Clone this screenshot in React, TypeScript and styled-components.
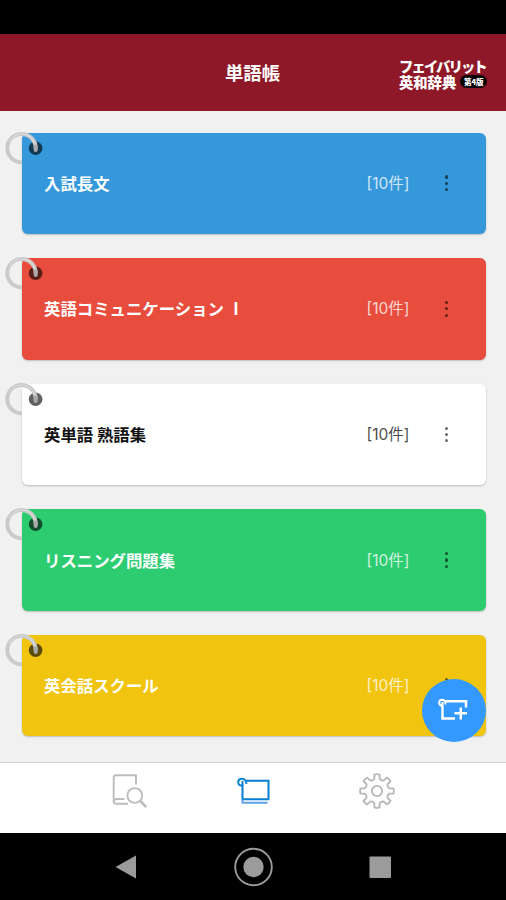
import React from "react";
import styled, { createGlobalStyle } from "styled-components";

const GlobalStyle = createGlobalStyle`
  * { box-sizing: border-box; }
  html, body { margin: 0; padding: 0; background: #000; }
  body { font-family: "Noto Sans CJK JP", sans-serif; overflow: hidden; }
`;

const Screen = styled.div`
  width: 506px;
  height: 900px;
  display: flex;
  flex-direction: column;
  background: #000;
  overflow: hidden;
`;

const StatusBar = styled.div`
  height: 34px;
  flex: none;
`;

const Header = styled.header`
  height: 76.5px;
  flex: none;
  display: grid;
  grid-template-columns: 1fr auto 1fr;
  align-items: center;
  padding-right: 18px;
  background: #8e1827;
  color: #fff;
`;

const Title = styled.h1`
  grid-column: 2;
  margin: 0 0 1px 17px;
  font-size: 18.4px;
  line-height: 24px;
  font-weight: 700;
`;

const Brand = styled.div`
  justify-self: end;
  width: 89px;
  padding-top: 3px;
  font-size: 14.3px;
  font-weight: 900;
  white-space: nowrap;
`;

const BrandKana = styled.div`
  height: 16px;
  line-height: 16px;
  font-size: 14.4px;
  letter-spacing: -1.95px;
`;

const BrandRow = styled.div`
  display: flex;
  align-items: center;
  gap: 4px;
  height: 16px;
  line-height: 16px;
`;

const Edition = styled.span`
  width: 27px;
  height: 13px;
  border-radius: 7px;
  background: #080305;
  font-size: 7.5px;
  line-height: 13px;
  text-align: center;
`;

const Content = styled.main`
  position: relative;
  flex: 1;
  min-height: 0;
  display: flex;
  flex-direction: column;
  gap: 24px;
  padding: 22px 20.5px 0 22px;
  background: #f1f1f1;
`;

const Card = styled.article<{ $color: string; $ink: string }>`
  position: relative;
  flex: none;
  height: 101.6px;
  display: flex;
  align-items: center;
  padding: 0 29px 1px 22px;
  border-radius: 6px;
  background: ${(p) => p.$color};
  color: ${(p) => p.$ink};
  box-shadow: 0 1px 2px rgba(0, 0, 0, 0.22);
`;

const CardName = styled.span`
  flex: 1;
  font-size: 16.4px;
  line-height: 24px;
  font-weight: 700;
  white-space: pre;
`;

const Count = styled.span`
  width: 70px;
  padding-top: 2px;
  font-family: Inter, "Noto Sans CJK JP", sans-serif;
  font-size: 15.5px;
  line-height: 24px;
  opacity: 0.76;
`;

const MenuButton = styled.button`
  width: 20px;
  height: 24px;
  display: flex;
  flex-direction: column;
  align-items: center;
  justify-content: center;
  gap: 3.2px;
  padding: 1px 0 0;
  border: 0;
  background: none;
`;

const Dot = styled.i`
  width: 3.2px;
  height: 3.2px;
  border-radius: 50%;
  background: rgba(0, 0, 0, 0.58);
`;

const RingSvg = styled.svg`
  position: absolute;
  left: -18px;
  top: -3px;
`;

const AddButton = styled.button`
  position: absolute;
  right: 20px;
  bottom: 20.5px;
  width: 64px;
  height: 63px;
  display: grid;
  place-items: center;
  padding: 0;
  border: 0;
  border-radius: 50%;
  background: #3399fe;
`;

const TabBar = styled.nav`
  height: 71px;
  flex: none;
  display: flex;
  justify-content: center;
  gap: 83px;
  padding-top: 6px;
  border-top: 1px solid #cfcfcf;
  background: #fff;
`;

const Tab = styled.button`
  width: 41px;
  height: 44px;
  display: grid;
  place-items: center;
  padding: 0;
  border: 0;
  background: none;
`;

const SystemBar = styled.div`
  height: 67px;
  flex: none;
  display: flex;
  justify-content: center;
  align-items: center;
  gap: 86px;
  background: #000;
`;

const cards = [
  { name: "入試長文", color: "#3498db", ink: "#fff" },
  { name: "英語コミュニケーション Ⅰ", color: "#e74c3c", ink: "#fff" },
  { name: "英単語 熟語集", color: "#ffffff", ink: "#111" },
  { name: "リスニング問題集", color: "#2ecc71", ink: "#fff" },
  { name: "英会話スクール", color: "#f1c40f", ink: "#fff" },
];

const Ring = () => (
  <RingSvg width="44" height="38" viewBox="0 0 44 38" fill="none">
    <circle cx="31.6" cy="18.3" r="6.8" fill="rgba(0,0,0,.62)" />
    <path d="M18 32.3A14.2 14.2 0 1 1 31.7 18.5" stroke="#cacaca" strokeWidth="4" />
    <path d="M5.5 12A13.4 13.4 0 0 1 30.8 14" stroke="#d8d8d8" strokeWidth="1.3" />
    <path d="M31.7 16.5v3.5" stroke="#aaa" strokeWidth="4" strokeLinecap="round" />
  </RingSvg>
);

const SearchBookIcon = () => (
  <svg width="36" height="36" viewBox="0 0 36 36" fill="none" stroke="#bdbdbd" strokeWidth="1.9">
    <path d="M25 11.5V2.2H5Q2.7 2.2 2.7 4.5V28q0 2.8 2.8 2.8H17M3 27q1-1 3-1h7.5" />
    <circle cx="23.8" cy="22.5" r="7.4" />
    <path d="M29.2 28l6 6" strokeWidth="2.5" />
  </svg>
);

const CardStackIcon = () => (
  <svg width="34" height="28" viewBox="0 0 34 28" fill="none" stroke="#087fd0" strokeWidth="2">
    <path d="M10 3.8H32.5V22.3H6.5V7.5" />
    <path d="M6 8.8Q2.2 8.4 2.2 5.2T5.2 1.7Q10 1.4 10.5 7M6.5 8.4V4" strokeWidth="1.9" />
    <path d="M6.5 22.5v3.3h25" strokeWidth="1.9" stroke="#5f9fe4" />
  </svg>
);

const AddCardIcon = () => (
  <svg width="32" height="24" viewBox="0 0 32 24" fill="none" stroke="#fff" strokeWidth="2.5">
    <path d="M7 3.2H28V9.5M4.5 8V20.5H17M22.8 9.5V21.5M16.5 15.3H29" />
    <path d="M4.5 7.7Q1.2 7.7 1.2 4.8T4 1.8Q7.5 1.8 7.5 6.5M4.5 8V4" strokeWidth="2" />
  </svg>
);

const gearOutline = Array.from({ length: 8 }, (_, i) => {
  const at = (radius: number, degrees: number) => {
    const a = ((i * 45 + degrees - 90) * Math.PI) / 180;
    return `${(18 + radius * Math.cos(a)).toFixed(2)} ${(18 + radius * Math.sin(a)).toFixed(2)}`;
  };
  return `${i ? "L" : "M"}${at(12.6, -12)}L${at(16.6, -9)}Q${at(17.3, 0)} ${at(16.6, 9)}L${at(12.6, 12)}Q${at(10.8, 22.5)} ${at(12.6, 33)}`;
}).join("");

const GearIcon = () => (
  <svg width="36" height="36" viewBox="0 0 36 36" fill="none" stroke="#b8b8b8" strokeWidth="1.9" strokeLinejoin="round">
    <path d={gearOutline + "Z"} />
    <circle cx="18" cy="18" r="5.1" />
  </svg>
);

export default function App() {
  return (
    <Screen>
      <GlobalStyle />
      <StatusBar />
      <Header>
        <Title>単語帳</Title>
        <Brand>
          <BrandKana>フェイバリット</BrandKana>
          <BrandRow>
            英和辞典<Edition>第4版</Edition>
          </BrandRow>
        </Brand>
      </Header>
      <Content>
        {cards.map((card) => (
          <Card key={card.name} $color={card.color} $ink={card.ink}>
            <Ring />
            <CardName>{card.name}</CardName>
            <Count>[10件]</Count>
            <MenuButton aria-label="メニュー">
              <Dot />
              <Dot />
              <Dot />
            </MenuButton>
          </Card>
        ))}
        <AddButton aria-label="追加">
          <AddCardIcon />
        </AddButton>
      </Content>
      <TabBar>
        <Tab aria-label="検索">
          <SearchBookIcon />
        </Tab>
        <Tab aria-label="単語帳">
          <CardStackIcon />
        </Tab>
        <Tab aria-label="設定">
          <GearIcon />
        </Tab>
      </TabBar>
      <SystemBar>
        <svg width="40" height="40" viewBox="0 0 40 40">
          <path d="M8.5 20L29 8.5V31.5Z" fill="#9b9b9b" />
        </svg>
        <svg width="40" height="40" viewBox="0 0 40 40">
          <circle cx="20.5" cy="20" r="18.3" fill="none" stroke="#9b9b9b" strokeWidth="1.9" />
          <circle cx="20.5" cy="20" r="10.2" fill="#9b9b9b" />
        </svg>
        <svg width="40" height="40" viewBox="0 0 40 40">
          <rect x="10.5" y="9.5" width="21.5" height="21.5" rx="1" fill="#9b9b9b" />
        </svg>
      </SystemBar>
    </Screen>
  );
}
